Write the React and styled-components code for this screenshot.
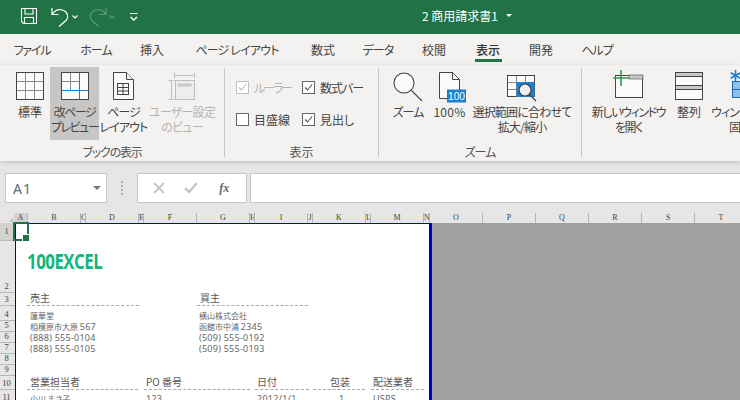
import React from 'react';
import styled, { createGlobalStyle } from 'styled-components';

const Global = createGlobalStyle`
  html, body { margin: 0; padding: 0; width: 740px; height: 400px; overflow: hidden; background: #e6e6e6; }
  #root { width: 740px; height: 400px; overflow: hidden; }
  * { box-sizing: border-box; }
`;

const FONT = `"Noto Sans CJK JP", "Noto Sans", sans-serif`;
const Shell = styled.div`
  width: 740px; height: 400px; display: flex; flex-direction: column; overflow: hidden;
  font-family: ${FONT}; font-feature-settings: "palt"; color: #444;
`;

/* Title bar */
const TitleBar = styled.header`
  height: 34px; flex: none; background: #217346; display: flex; align-items: center; color: #fff; padding-left: 20px;
`;
const Qat = styled.div`display: flex; align-items: center; width: 402px; flex: none;`;
const QatBtn = styled.span`display: flex; width: ${p => p.$w}px; height: 20px; flex: none;`;
const DocTitle = styled.div`font-size: 12px; display: flex; align-items: center; gap: 8px; line-height: 16px; padding-bottom: 3px;`;
const Caret = styled.span`
  width: 0; height: 0; border-left: 3px solid transparent; border-right: 3px solid transparent; border-top: 3px solid #fff;
`;

/* Tabs */
const Tabs = styled.nav`height: 31px; flex: none; background: #f3f2f1; display: flex;`;
const Tab = styled.div`
  width: ${p => p.$w}px; flex: none; text-align: center; font-size: 12px; line-height: 31px; position: relative; color: #444;
  letter-spacing: ${p => p.$ls || 0}px; white-space: pre;
  font-weight: ${p => p.$active ? 500 : 400};
  ${p => p.$active && `color:#333;&::after{content:"";position:absolute;left:15px;right:14px;top:25px;height:2.5px;background:#217346;}`}
`;

/* Ribbon */
const Ribbon = styled.section`
  height: 96px; flex: none; background: #f3f2f1; display: flex; position: relative; z-index: 2;
  box-shadow: 0 1px 4px rgba(0,0,0,.18);
  padding-top: 2px;
`;
const Group = styled.div`
  width: ${p => p.$w}px; flex: none; display: flex; flex-direction: column; position: relative; height: 89px; margin-top: 1px;
  ${p => p.$sep && `border-right: 1px solid #c8c6c4;`}
`;
const GroupBody = styled.div`
  height: 73px; margin-top: -1px; display: flex; padding-left: ${p => p.$pl || 0}px; flex: none;
`;
const GroupLabel = styled.div`
  text-align: center; font-size: 12px; line-height: 16px; color: #555; margin-top: 4px; letter-spacing: ${p => p.$ls || 0}px;
`;
const RBtn = styled.div`
  width: ${p => p.$w}px; flex: none; height: 73px; display: flex; flex-direction: column; align-items: center;
  background: ${p => p.$active ? '#c8c6c4' : 'transparent'}; padding-top: 5px;
  color: ${p => p.$off ? '#b4b4b4' : '#444'};
`;
const RIcon = styled.span`display: block; height: 33px; flex: none; width: 100%;`;
const RText = styled.div`font-size: 12px; line-height: 14.5px; text-align: center; white-space: nowrap; letter-spacing: ${p => p.$ls || 0}px;`;
const InlineCaret = styled.span`
  display: inline-block; width: 0; height: 0; margin-left: 4px; vertical-align: middle;
  border-left: 3px solid transparent; border-right: 3px solid transparent; border-top: 3px solid #555;
`;

const Checks = styled.div`
  display: grid; grid-template-columns: 66px 66px; grid-auto-rows: 32px; padding: 4px 0 0 11px; 
`;
const Check = styled.div`
  display: flex; align-items: center; gap: 5px; font-size: 12px; color: ${p => p.$off ? '#b4b4b4' : '#444'}; white-space: nowrap; height: 32px;
  letter-spacing: ${p => p.$ls || 0}px;
`;
const Box = styled.span`
  width: 13px; height: 13px; flex: none; background: #fff; border: 1px solid ${p => p.$off ? '#c0c0c0' : '#666'}; display: flex;
`;

/* Formula bar */
const FormulaBar = styled.div`
  height: 52px; flex: none; background: #e6e6e6; display: flex; align-items: flex-start; padding: 12px 0 0 5px;
`;
const NameBox = styled.div`
  width: 102px; height: 30px; background: #fff; border: 1px solid #c6c6c6; display: flex; align-items: center; justify-content: space-between;
  padding: 0 5px 0 7px; font-size: 14px; color: #5b6b7b; font-family: "Noto Sans", sans-serif; letter-spacing: 1px; flex: none;
`;
const NameCaret = styled.span`width:0;height:0;border-left:4px solid transparent;border-right:4px solid transparent;border-top:4px solid #777;`;
const Dots = styled.div`
  width: 30px; flex: none; height: 30px; display: flex; flex-direction: column; align-items: center; justify-content: center; gap: 2px;
  span { width: 2px; height: 2px; background: #b0b0b0; display: block; }
`;
const FxBox = styled.div`
  width: 110px; height: 30px; flex: none; background: #fff; border: 1px solid #c6c6c6; display: flex; align-items: center; justify-content: space-around; padding: 0 5px; margin-right: 3px; color: #c6c6c6;
`;
const FxText = styled.span`font-family: "Liberation Serif", serif; font-style: italic; font-weight: 700; font-size: 12px; color: #666; width: 16px; text-align: center;`;
const FormulaInput = styled.div`flex: 1; height: 30px; background: #fff; border: 1px solid #c6c6c6; border-right: 0;`;

/* Sheet */
const HeaderRow = styled.div`height: 10px; flex: none; display: flex; background: #e6e6e6;`;
const Corner = styled.div`
  width: 14px; flex: none; position: relative;
  &::after { content:""; position:absolute; right:1px; bottom:1px; border-left:4px solid transparent; border-bottom:4px solid #c0c0c0; }
`;
const ColHead = styled.div`
  width: ${p => p.$w}px; flex: none; font-family: "Liberation Serif", serif; font-size: 8px; line-height: 10px; text-align: center; color: #444; overflow: hidden;
  border-right: 1px solid #b4b4b4; background: ${p => p.$active ? '#d2d2d2' : 'transparent'};
`;
const SheetBody = styled.div`flex: 1; display: flex; min-height: 0; position: relative;`;
const RowHeads = styled.div`width: 15px; flex: none; display: flex; flex-direction: column; background: #e6e6e6;`;
const RowHead = styled.div`
  height: ${p => p.$h}px; flex: none; font-family: "Liberation Serif", serif; font-size: 8.5px; line-height: 11px; text-align: center; color: #444;
  display: flex; align-items: flex-end; justify-content: center; padding-right: 2px; padding-bottom: ${p => p.$pb ?? 0}px;
  border-bottom: 1px solid #b9b9b9; background: ${p => p.$active ? '#d2d2d2' : 'transparent'};
`;
const Page = styled.div`
  width: 417px; flex: none; background: #fff; border-left: 1.5px solid #0000c8; border-top: 1.5px solid #0000c8; border-right: 3px solid #0000c8;
  display: grid; align-content: start;
  grid-template-columns: 11px 54px 5px 53px 5px 53px 53px 5px 53px 5px 53px 5px 53px 5px;
  grid-template-rows: 16.5px 52px 13px 15px repeat(5, 11px) 14px 14px;
  font-size: 8px; color: #666;
`;
const Outside = styled.div`flex: 1; background: #a0a0a0;`;
const Cell = styled.div`
  grid-column: ${p => p.$col}; grid-row: ${p => p.$row}; white-space: nowrap; line-height: 11px; padding-left: ${p => p.$pl ?? 3}px;
  align-self: end; font-family: "Noto Sans CJK JP", sans-serif; font-size: 8px;
`;
const Num = styled.span`font-family: "Noto Sans", sans-serif; font-size: 9px; letter-spacing: .25px; line-height: 11px;`;
const Heading = styled.div`
  grid-column: ${p => p.$col}; grid-row: ${p => p.$row}; white-space: nowrap; font-size: 10px; line-height: 12px; color: #555; height: 100%;
  padding-left: ${p => p.$pl ?? 3}px; border-bottom: 1px dashed #a8a8a8; margin-right: ${p => p.$mr ?? 0}px;
  font-family: "Noto Sans CJK JP", sans-serif; display: flex; align-items: flex-end; padding-bottom: 1px;
`;
const Brand = styled.div`
  grid-column: 2 / 9; grid-row: 2; align-self: start; margin-top: 8px; font-family: "Open Sans", sans-serif; font-weight: 700; font-size: 21px; line-height: 24px;
  color: #10b67a; letter-spacing: -.6px; transform: scaleX(.8); transform-origin: left center; white-space: nowrap;
`;
const Selection = styled.div`
  position: absolute; left: 13px; top: -1px; width: 16px; height: 19px; border: 2px solid #217346; pointer-events: none;
  &::after { content:""; position:absolute; right:-3px; bottom:-3px; width:6px; height:6px; background:#217346; border:1px solid #fff; }
`;

/* Icons */
const Svg = ({ w = 28, h = 30, dx = 0, dy = 0, children }) => (
  <svg width={w} height={h} viewBox={`0 0 ${w} ${h}`} style={{ display: 'block', margin: `0 auto`, overflow: 'visible', transform: dx || dy ? `translate(${dx}px, ${dy}px)` : undefined }} fill="none">{children}</svg>
);
const Line = '#444';
const GridIcon = () => (
  <Svg w={28} h={28}>
    <rect x=".5" y=".5" width="27" height="27" fill="#fbfbfb" stroke={Line} />
    <path d="M9.5 1v26M18.5 1v26M1 9.5h26M1 18.5h26" stroke="#8a8a8a" />
  </Svg>
);
const BreakIcon = () => (
  <Svg w={28} h={28}>
    <rect x=".5" y=".5" width="27" height="27" fill="#fbfbfb" stroke={Line} />
    <path d="M9.5 1v17M1 9.5h17" stroke="#8a8a8a" />
    <path d="M18.5 1v26M1 18.5h26" stroke="#1b7fcf" />
  </Svg>
);
const PageLayoutIcon = () => (
  <Svg w={21} h={28}>
    <path d="M.5.5h13l7 7v20H.5z" fill="#fbfbfb" stroke={Line} />
    <path d="M13.5.5v7h7" stroke={Line} fill="#eee" />
    <rect x="4.5" y="11.5" width="11" height="11" stroke={Line} />
    <path d="M4.5 15.5h11M4.5 19h11M10 11.500v11" stroke={Line} />
  </Svg>
);
const CustomViewIcon = () => (
  <Svg w={28} h={30}>
    <path d="M6.5 3.5h20M6.5.5v6M26.5.5v6M.5 8.5h6M.5 27.5h6M3.5 8.5v19" stroke="#bdbdbd" />
    <rect x="7.5" y="8.5" width="19" height="19" fill="#ededed" stroke="#bdbdbd" />
    <rect x="9.5" y="11.5" width="14" height="3" fill="#c8c8c8" />
  </Svg>
);
const MagIcon = () => (
  <Svg w={30} h={30}>
    <circle cx="11" cy="11" r="10" fill="#fbfbfb" stroke={Line} strokeWidth="1.1" />
    <path d="M18.5 18.500L29 29" stroke={Line} strokeWidth="1.1" />
  </Svg>
);
const Hundred = styled.text`font-family: "Liberation Sans", sans-serif; font-size: 11px; fill: #fff;`;
const PctIcon = () => (
  <Svg w={28} h={30} dx={3}>
    <path d="M.5.5h13l7 7v19H.5z" fill="#fbfbfb" stroke={Line} />
    <path d="M13.5.5v7h7" stroke={Line} />
    <rect x="8" y="17.500" width="19" height="13" fill="#1b82d2" />
    <Hundred x="9" y="28" textLength="17" lengthAdjust="spacingAndGlyphs">100</Hundred>
  </Svg>
);
const FitIcon = () => (
  <Svg w={30} h={28} dy={3}>
    <rect x=".5" y=".5" width="27" height="21" fill="#fbfbfb" stroke={Line} />
    <path d="M9.5 1v21M18.5 1v21M1 7.5h26M1 14.5h26" stroke="#8a8a8a" />
    <rect x="9.5" y="7" width="18" height="15" fill="#1b82d2" />
    <circle cx="18" cy="15" r="6" fill="#f0f0f0" stroke={Line} strokeWidth="1.2" />
    <path d="M22.500 19.500L29 26" stroke={Line} strokeWidth="1.2" />
  </Svg>
);
const NewWinIcon = () => (
  <Svg w={31} h={30} dy={-2}>
    <rect x="2.5" y="5.5" width="27" height="22" fill="#fbfbfb" stroke={Line} />
    <rect x="16" y="5" width="14" height="4" fill="#c8c8c8" stroke={Line} strokeWidth=".6" />
    <path d="M8 0v16M0 8h16" stroke="#2e9a50" strokeWidth="1.6" />
  </Svg>
);
const ArrangeIcon = () => (
  <Svg w={28} h={28}>
    <rect x=".5" y=".5" width="27" height="27" fill="#fbfbfb" stroke={Line} />
    <path d="M.5 13.500h27" stroke={Line} />
    <rect x="1" y="1" width="26" height="3.5" fill="#c8c8c8" />
    <rect x="1" y="14" width="26" height="3.5" fill="#c8c8c8" />
    <path d="M1 4.500h26M1 17.500h26" stroke={Line} />
  </Svg>
);
const FreezeIcon = () => (
  <Svg w={30} h={30} dy={-2}>
    <path d="M5.500 0v11M.7 2.800l9.600 5.500M10.300 2.800L.7 8.300" stroke="#1b82d2" strokeWidth="1.6" />
    <rect x="2.5" y="11.500" width="26" height="16" fill="#8cc0ea" stroke="#1a6fb5" />
    <path d="M2.500 19.500h26" stroke="#1a6fb5" />
  </Svg>
);
const Tick = ({ color = '#555' }) => (
  <svg width="11" height="11" viewBox="0 0 11 11" fill="none" style={{ display: 'block' }}><path d="M2 5.500l2.500 2.500L9 2.500" stroke={color} strokeWidth="1.1" /></svg>
);

const Chev = ({ c = '#fff' }) => (
  <svg width="6" height="4" viewBox="0 0 6 4" style={{ display: 'block', marginTop: 8 }} fill="none"><path d="M.5.5L3 3l2.500-2.500" stroke={c} strokeWidth="1.1" /></svg>
);

const colHeads = [
  ['A', 14, 1], ['B', 53], ['C', 5], ['D', 53], ['E', 5], ['F', 53], ['G', 53], ['H', 5], ['I', 53], ['J', 5],
  ['K', 53], ['L', 5], ['M', 53], ['N', 6], ['O', 53], ['P', 53], ['Q', 53], ['R', 53], ['S', 53], ['T', 53],
];
const rowHeads = [
  ['1', 18, true, 3], ['2', 52], ['3', 13], ['4', 15], ['5', 11], ['6', 11], ['7', 11], ['8', 11], ['9', 11], ['10', 14], ['11', 14],
];
const tabs = [
  ['ファイル', 64, 0, -1.2], ['ホーム', 64, 0, -1], ['挿入', 48], ['ページ レイアウト', 122, 0, -.8], ['数式', 50], ['データ', 60, 0, -1],
  ['校閲', 52], ['表示', 56, true], ['開発', 50], ['ヘルプ', 62, 0, -1],
];

export default function App() {
  return (
    <Shell>
      <Global />
      <TitleBar>
        <Qat>
          <QatBtn $w={31}>
            <svg width="18" height="18" viewBox="0 0 18 18" fill="none" style={{ marginTop: 0 }} stroke="#fff" strokeWidth="1.1">
              <path d="M1.500 1.500h15v15h-13l-2-2z" />
              <path d="M5 1.500v5.500h8V1.500M4.500 16.500v-6h9v6" />
            </svg>
          </QatBtn>
          <QatBtn $w={21}>
            <svg width="19" height="20" viewBox="0 0 19 20" fill="none" stroke="#fff" strokeWidth="1.2">
              <path d="M1 1v6.500h6.500M1.500 7C4 3 8 2 11.500 3c5 1.500 6.500 6.500 4 10L8 19.500" />
            </svg>
          </QatBtn>
          <QatBtn $w={17}><Chev /></QatBtn>
          <QatBtn $w={20}>
            <svg width="18" height="20" viewBox="0 0 18 20" fill="none" stroke="#5e9a7c" strokeWidth="1.2">
              <path d="M17 1v6.500h-6.500M16.500 7C14 3 10 2 6.500 3c-5 1.500-6.500 6.500-4 10L10 19.500" />
            </svg>
          </QatBtn>
          <QatBtn $w={21}><Chev c="#5e9a7c" /></QatBtn>
          <QatBtn $w={20}>
            <svg width="8" height="10" viewBox="0 0 8 10" fill="none" stroke="#fff" style={{ marginTop: 5 }}><path d="M0 1.500h7.500" /><path d="M.5 5L3.750 8 7 5" strokeWidth="1.3" /></svg>
          </QatBtn>
        </Qat>
        <DocTitle>2 商用請求書1<Caret /></DocTitle>
      </TitleBar>

      <Tabs>
        {tabs.map(([t, w, a, ls]) => <Tab key={t} $w={w} $active={a} $ls={ls}>{t}</Tab>)}
      </Tabs>

      <Ribbon>
        <Group $w={225} $sep>
          <GroupBody $pl={10}>
            <RBtn $w={40}><RIcon><GridIcon /></RIcon><RText>標準</RText></RBtn>
            <RBtn $w={49} $active><RIcon><BreakIcon /></RIcon><RText $ls={-1.5}>改ページ<br />プレビュー</RText></RBtn>
            <RBtn $w={49}><RIcon><PageLayoutIcon /></RIcon><RText $ls={-.9}>ページ<br />レイアウト</RText></RBtn>
            <RBtn $w={68} $off><RIcon><CustomViewIcon /></RIcon><RText $ls={-.7}>ユーザー設定<br />のビュー</RText></RBtn>
          </GroupBody>
          <GroupLabel $ls={-1.2}>ブックの表示</GroupLabel>
        </Group>
        <Group $w={154} $sep>
          <GroupBody>
            <Checks>
              <Check $off $ls={-2}><Box $off><Tick color="#bbb" /></Box>ルーラー</Check>
              <Check $ls={-1}><Box><Tick /></Box>数式バー</Check>
              <Check><Box />目盛線</Check>
              <Check><Box><Tick /></Box>見出し</Check>
            </Checks>
          </GroupBody>
          <GroupLabel>表示</GroupLabel>
        </Group>
        <Group $w={203} $sep>
          <GroupBody $pl={7}>
            <RBtn $w={44}><RIcon><MagIcon /></RIcon><RText $ls={-1}>ズーム</RText></RBtn>
            <RBtn $w={39}><RIcon><PctIcon /></RIcon><RText $ls={.3}>100%</RText></RBtn>
            <RBtn $w={106}><RIcon><FitIcon /></RIcon><RText $ls={-.8}>選択範囲に合わせて<br />拡大/縮小</RText></RBtn>
          </GroupBody>
          <GroupLabel $ls={-1}>ズーム</GroupLabel>
        </Group>
        <Group $w={160}>
          <GroupBody $pl={7}>
            <RBtn $w={79}><RIcon><NewWinIcon /></RIcon><RText $ls={-1.4}>新しいウィンドウ<br />を開く</RText></RBtn>
            <RBtn $w={42}><RIcon><ArrangeIcon /></RIcon><RText>整列</RText></RBtn>
            <RBtn $w={70}><RIcon><FreezeIcon /></RIcon><RText $ls={-1}>ウィンドウ枠の<br />固定<InlineCaret /></RText></RBtn>
          </GroupBody>
        </Group>
      </Ribbon>

      <FormulaBar>
        <NameBox>A1<NameCaret /></NameBox>
        <Dots><span /><span /><span /><span /></Dots>
        <FxBox>
          <svg width="14" height="14" viewBox="0 0 14 14" fill="none" stroke="#c6c6c6" strokeWidth="1.8"><path d="M2 2l10 10M12 2L2 12" /></svg>
          <svg width="16" height="14" viewBox="0 0 16 14" fill="none" stroke="#c6c6c6" strokeWidth="2.4"><path d="M2 7l4 4 8-9" /></svg>
          <FxText>fx</FxText>
        </FxBox>
        <FormulaInput />
      </FormulaBar>

      <HeaderRow>
        <Corner />
        {colHeads.map(([l, w, a]) => <ColHead key={l} $w={w} $active={a}>{l}</ColHead>)}
      </HeaderRow>

      <SheetBody>
        <RowHeads>
          {rowHeads.map(([l, h, a, pb]) => <RowHead key={l} $h={h} $active={a} $pb={pb}>{l}</RowHead>)}
        </RowHeads>
        <Page>
          <Brand>100EXCEL</Brand>
          <Heading $col="2 / 5" $row={3}>売主</Heading>
          <Heading $col="7 / 10" $row={3}>買主</Heading>
          <Cell $col="2 / 5" $row={4}>蓮華堂</Cell>
          <Cell $col="2 / 5" $row={5}>相模原市大原 <Num>567</Num></Cell>
          <Cell $col="2 / 5" $row={6}><Num>(888) 555-0104</Num></Cell>
          <Cell $col="2 / 5" $row={7}><Num>(888) 555-0105</Num></Cell>
          <Cell $col="7 / 10" $row={4} $pl={2}>横山株式会社</Cell>
          <Cell $col="7 / 10" $row={5} $pl={2}>函館市中浦 <Num>2345</Num></Cell>
          <Cell $col="7 / 10" $row={6} $pl={2}><Num>(509) 555-0192</Num></Cell>
          <Cell $col="7 / 10" $row={7} $pl={2}><Num>(509) 555-0193</Num></Cell>
          <Heading $col="2 / 5" $row={10} $mr={1}>営業担当者</Heading>
          <Heading $col="6 / 8" $row={10} $pl={2}>PO 番号</Heading>
          <Heading $col="9 / 11" $row={10} $pl={2} $mr={4}>日付</Heading>
          <Heading $col="11 / 13" $row={10} $pl={17} $mr={6}>包装</Heading>
          <Heading $col="13 / 14" $row={10} $pl={2}>配送業者</Heading>
          <Cell $col="2 / 5" $row={11}>小川 まさ子</Cell>
          <Cell $col="6 / 8" $row={11} $pl={2}><Num>123</Num></Cell>
          <Cell $col="9 / 11" $row={11} $pl={2}><Num>2012/1/1</Num></Cell>
          <Cell $col="11 / 13" $row={11} $pl={26}><Num>1</Num></Cell>
          <Cell $col="13 / 14" $row={11} $pl={2}><Num>USPS</Num></Cell>
        </Page>
        <Outside />
        <Selection />
      </SheetBody>
    </Shell>
  );
}
